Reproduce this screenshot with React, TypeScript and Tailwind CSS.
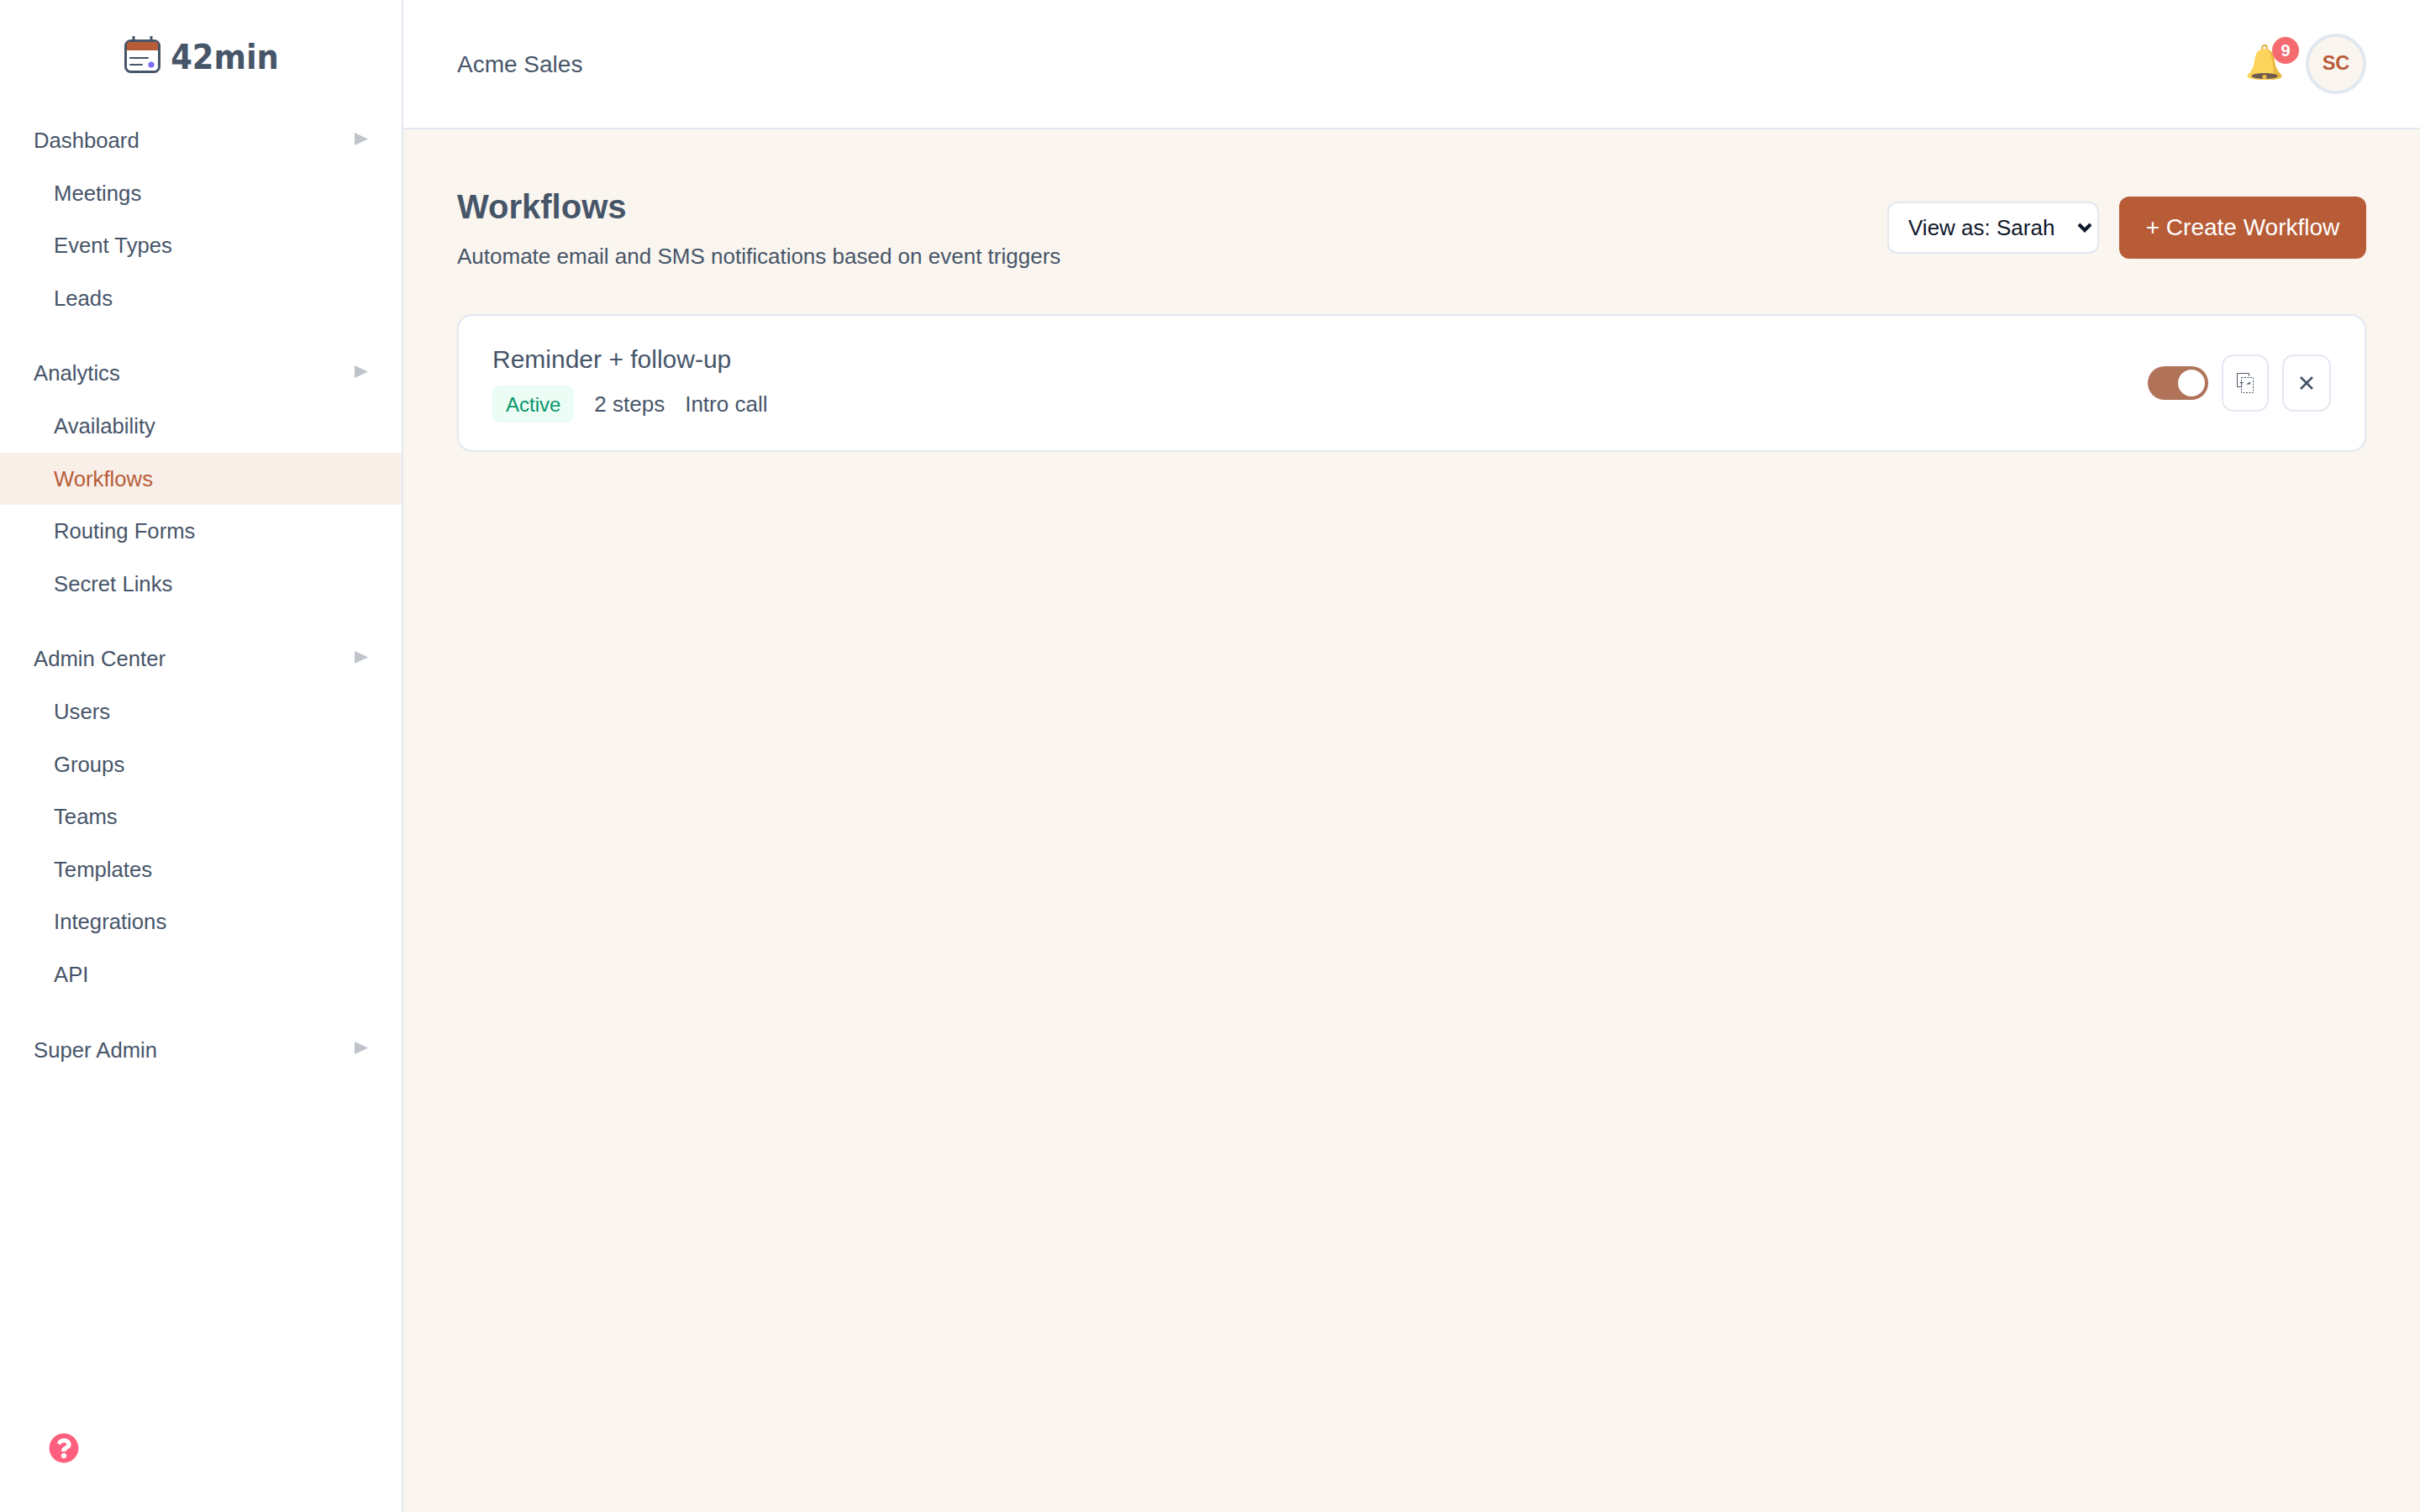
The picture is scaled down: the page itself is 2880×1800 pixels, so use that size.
import { FaQuestionCircle } from 'react-icons/fa';

const navGroups = [
  { title: 'Dashboard', items: ['Meetings', 'Event Types', 'Leads'] },
  { title: 'Analytics', items: ['Availability', 'Workflows', 'Routing Forms', 'Secret Links'] },
  { title: 'Admin Center', items: ['Users', 'Groups', 'Teams', 'Templates', 'Integrations', 'API'] },
  { title: 'Super Admin', items: [] as string[] },
];

function LogoIcon() {
  return (
    <svg width="43" height="44" viewBox="0 0 43 44" fill="none">
      <path d="M11 0.5v6M32 0.5v6" stroke="#475569" strokeWidth="3" strokeLinecap="round" />
      <rect x="1.5" y="5.5" width="40" height="37" rx="6" fill="#fff" stroke="#475569" strokeWidth="3" />
      <path d="M3 17V10a3 3 0 0 1 3-3h31a3 3 0 0 1 3 3v7z" fill="#b85c38" />
      <path d="M7 26h21M7 34h14" stroke="#475569" strokeWidth="2.2" strokeLinecap="round" />
      <circle cx="32" cy="34" r="3.6" fill="#7c6cff" />
    </svg>
  );
}

function BellIcon() {
  return (
    <svg width="44" height="44" viewBox="0 0 44 44">
      <circle cx="22" cy="4" r="3" fill="none" stroke="#dba93a" strokeWidth="1.8" />
      <path d="M22 5C13 5 11 12 10 20 9 28 6 32 2 36c-1 2 0 3 2 4 8 3 28 3 36 0 2-1 3-2 2-4-4-4-7-8-8-16-1-8-3-15-12-15z" fill="#fcd45c" />
      <path d="M26 6c5 2 7 7 8 14 1 8 4 12 8 16 1 2 0 3-2 4-3 1-6 1.600-9 2 3-7 2-25-5-36z" fill="#e9b840" />
      <ellipse cx="22" cy="37.500" rx="15.500" ry="3.400" fill="#6e5b52" />
      <circle cx="22" cy="38.500" r="2.600" fill="#eebd48" />
    </svg>
  );
}

function DuplicateIcon() {
  return (
    <svg width="20" height="24" viewBox="0 0 20 24" fill="none">
      <path d="M5 16.500H0.500V0.500H14.500V4" stroke="#475569" strokeWidth="1" />
      <rect x="5.500" y="5.500" width="14" height="18" stroke="#475569" strokeWidth="1" strokeDasharray="2 1.500" />
      <path d="M3.500 11.500H8M5.700 11.500V15" stroke="#475569" strokeWidth="1" />
      <path d="M11 13.500l5-3v3z" fill="#475569" />
    </svg>
  );
}

export default function App() {
  return (
    <div className="flex h-screen bg-[#faf5ef] text-[#475569] font-['Liberation_Sans',Arial,sans-serif]">
      {/* Sidebar */}
      <aside className="flex h-full w-[480px] shrink-0 flex-col border-r-2 border-[#e2e8f0] bg-white">
        <div className="flex h-[136px] items-start justify-center gap-[12px] pt-[43px] pl-[2px]">
          <LogoIcon />
          <span className="mt-[2px] font-['DejaVu_Sans_Condensed','DejaVu_Sans',sans-serif] text-[41px] leading-[46px] font-bold">42min</span>
        </div>
        <nav>
          {navGroups.map((group) => (
            <div key={group.title} className="mb-[27px]">
              <div className="flex h-[62.6px] items-center justify-between pr-[40px] pl-[40px] text-[25.7px]">
                <span>{group.title}</span>
                <svg width="16" height="15" viewBox="0 0 16 15" className="mb-[4px]">
                  <polygon points="0,0 16,7.500 0,15" fill="#bfc3ca" />
                </svg>
              </div>
              {group.items.map((item) => (
                <div
                  key={item}
                  className={
                    item === 'Workflows'
                      ? 'flex h-[62.6px] items-center bg-[#f9efe9] pl-[64px] text-[25.7px] text-[#b85c38]'
                      : 'flex h-[62.6px] items-center pl-[64px] text-[25.7px]'
                  }
                >
                  {item}
                </div>
              ))}
            </div>
          ))}
        </nav>
        <div className="mt-auto pb-[58px] pl-[58px]">
          <FaQuestionCircle className="h-[36px] w-[36px] text-[#ff5f7f]" />
        </div>
      </aside>

      <div className="flex min-w-0 flex-1 flex-col">
        {/* Header */}
        <header className="flex h-[154px] shrink-0 items-center justify-between border-b-2 border-[#e2e8f0] bg-white px-[64px]">
          <span className="mt-[1px] text-[28px]">Acme Sales</span>
          <div className="flex items-center gap-[27px]">
            <div className="relative mb-[3px] h-[44px] w-[44px]">
              <BellIcon />
              <span className="absolute -top-[9px] left-[31px] flex h-[32px] w-[32px] items-center justify-center rounded-full bg-[#f56b6f] text-[20px] font-bold text-white">
                9
              </span>
            </div>
            <div className="flex h-[72px] w-[72px] items-center justify-center rounded-full border-4 border-[#e2e8f0] bg-[#faf5ef] text-[23.5px] font-bold text-[#b85c38]">
              SC
            </div>
          </div>
        </header>

        {/* Content */}
        <main className="flex-1 px-[64px] pt-[62px]">
          <div className="mb-[48px] flex items-center justify-between">
            <div>
              <h1 className="text-[40px] leading-[61px] font-bold">Workflows</h1>
              <p className="mt-[7px] text-[26px] leading-[42px]">Automate email and SMS notifications based on event triggers</p>
            </div>
            <div className="flex items-center gap-[24px]">
              <div className="relative">
                <select className="h-[62px] w-[252px] appearance-none rounded-[12px] border-2 border-[#e2e8f0] bg-white pl-[23px] text-[26px] text-[#0f172a]">
                  <option>View as: Sarah</option>
                </select>
                <svg width="18" height="12" viewBox="0 0 18 12" fill="none" className="pointer-events-none absolute top-[25px] right-[8px]">
                  <path d="M2 2l7 7 7-7" stroke="#0f172a" strokeWidth="4.200" />
                </svg>
              </div>
              <button className="h-[74px] w-[294px] rounded-[12px] bg-[#b85c38] text-[28px] text-white">+ Create Workflow</button>
            </div>
          </div>

          <div className="flex items-center justify-between rounded-[18px] border-2 border-[#e2e8f0] bg-white px-[40px] pt-[32px] pb-[33px]">
            <div>
              <div className="text-[30px] leading-[40px]">Reminder + follow-up</div>
              <div className="mt-[11px] flex items-center gap-[24px] text-[26px]">
                <span className="flex h-[44px] items-center rounded-[8px] bg-[#ecfdf5] px-[16px] pt-[1px] text-[24px] text-[#059669]">Active</span>
                <span>2 steps</span>
                <span>Intro call</span>
              </div>
            </div>
            <div className="flex items-center gap-[16px]">
              <div className="relative h-[40px] w-[72px] rounded-full bg-[#b0735a]">
                <span className="absolute top-[4px] right-[4px] h-[32px] w-[32px] rounded-full bg-white" />
              </div>
              <button className="flex h-[68px] w-[56px] items-center justify-center rounded-[14px] border-2 border-[#e2e8f0] bg-white">
                <DuplicateIcon />
              </button>
              <button className="flex h-[68px] w-[58px] items-center justify-center rounded-[14px] border-2 border-[#e2e8f0] bg-white">
                <svg width="16" height="16" viewBox="0 0 16 16" fill="none">
                  <path d="M1 1l14 14M15 1L1 15" stroke="#475569" strokeWidth="2.600" />
                </svg>
              </button>
            </div>
          </div>
        </main>
      </div>
    </div>
  );
}
